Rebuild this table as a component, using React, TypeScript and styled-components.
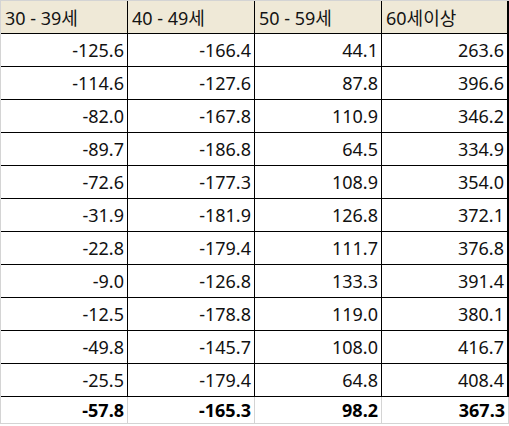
import React from "react";
import styled, { createGlobalStyle } from "styled-components";

const Global = createGlobalStyle`
  html, body { margin: 0; padding: 0; background: #ffffff; }
  body { font-family: "Noto Sans", "Noto Sans CJK KR", sans-serif; }
`;

const Sheet = styled.div`
  display: grid;
  grid-template-columns: repeat(4, 127px);
  width: 509px;
  border-left: 1px solid #d4d4d4;
  border-top: 1px solid #d4d4d4;
  box-sizing: border-box;
`;

const HeadCell = styled.div<{ $last?: boolean }>`
  box-sizing: border-box;
  height: 33px;
  background: #efe9d7;
  border-right: ${(p) => (p.$last ? "2px" : "1px")} solid #000;
  border-bottom: 1px solid #000;
  display: flex;
  align-items: center;
  padding-left: 4px;
  font-size: 18px;
  color: #141414;
  white-space: nowrap;
`;

const Cell = styled.div<{ $last?: boolean }>`
  box-sizing: border-box;
  height: 33px;
  border-right: ${(p) => (p.$last ? "2px" : "1px")} solid #000;
  border-bottom: 1px solid #000;
  display: flex;
  align-items: center;
  justify-content: flex-end;
  padding-right: ${(p) => (p.$last ? "3px" : "3px")};
  font-size: 18px;
  color: #111;
  white-space: nowrap;
`;

const TotalCell = styled.div`
  box-sizing: border-box;
  height: 27px;
  border-right: 1px solid #d4d4d4;
  border-bottom: 1px solid #d4d4d4;
  display: flex;
  align-items: center;
  justify-content: flex-end;
  padding-right: 3px;
  font-size: 18px;
  font-weight: 700;
  color: #000;
  white-space: nowrap;
`;

const headers = ["30 - 39세", "40 - 49세", "50 - 59세", "60세이상"];

const rows: string[][] = [
  ["-125.6", "-166.4", "44.1", "263.6"],
  ["-114.6", "-127.6", "87.8", "396.6"],
  ["-82.0", "-167.8", "110.9", "346.2"],
  ["-89.7", "-186.8", "64.5", "334.9"],
  ["-72.6", "-177.3", "108.9", "354.0"],
  ["-31.9", "-181.9", "126.8", "372.1"],
  ["-22.8", "-179.4", "111.7", "376.8"],
  ["-9.0", "-126.8", "133.3", "391.4"],
  ["-12.5", "-178.8", "119.0", "380.1"],
  ["-49.8", "-145.7", "108.0", "416.7"],
  ["-25.5", "-179.4", "64.8", "408.4"],
];

const totals = ["-57.8", "-165.3", "98.2", "367.3"];

export default function App() {
  return (
    <>
      <Global />
      <Sheet>
        {headers.map((h, i) => (
          <HeadCell key={h} $last={i === 3}>
            {h}
          </HeadCell>
        ))}
        {rows.map((r, ri) =>
          r.map((v, ci) => (
            <Cell key={`${ri}-${ci}`} $last={ci === 3}>
              {v}
            </Cell>
          ))
        )}
        {totals.map((t, i) => (
          <TotalCell key={`t-${i}`}>{t}</TotalCell>
        ))}
      </Sheet>
    </>
  );
}
